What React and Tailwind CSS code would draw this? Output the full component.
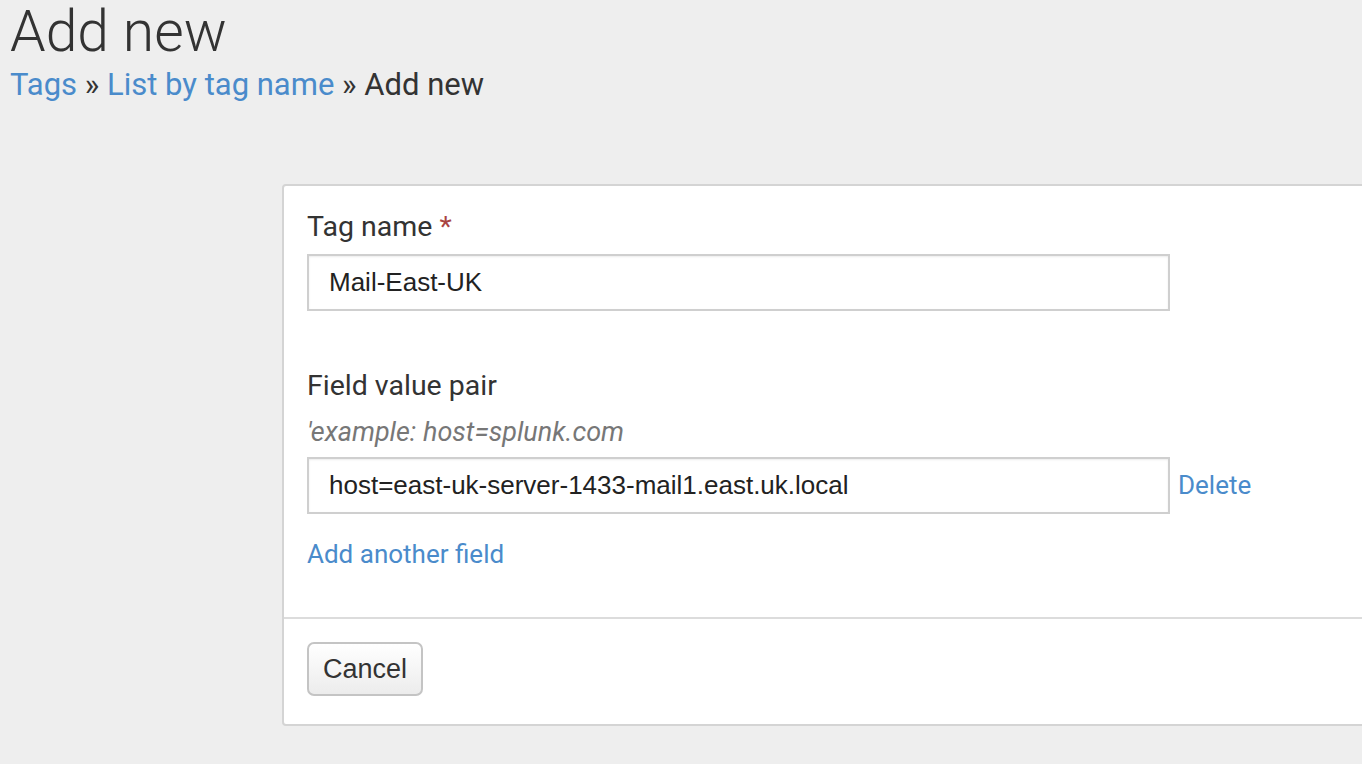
export default function App() {
  return (
    <div className="min-h-screen bg-[#eeeeee] font-['Roboto',sans-serif] text-[#333333] overflow-hidden">
      <div className="pl-[10px] pt-0">
        <h1 className="text-[57px] font-light leading-[64px] text-[#333]">Add new</h1>
        <div className="text-[31px] leading-[42px]">
          <a className="text-[#4a8bcb]">Tags</a>
          <span className="text-[#333]"> » </span>
          <a className="text-[#4a8bcb]">List by tag name</a>
          <span className="text-[#333]"> » Add new</span>
        </div>
      </div>

      <div className="ml-[282px] mt-[78px] w-[1100px] bg-white border-2 border-[#d4d4d4] rounded-[4px]">
        <div className="px-[23px] pt-[24px] pb-[47px]">
          <label className="block text-[28.5px] leading-[34px] text-[#333]">
            Tag name <span className="text-[#a94442]">*</span>
          </label>
          <input
            readOnly
            value="Mail-East-UK"
            className="mt-[10px] block w-[863px] h-[57px] border-2 border-[#cfcfcf] bg-white px-[20px] text-[26px] font-['Liberation_Sans',Arial,sans-serif] text-[#222] shadow-[inset_0_1px_2px_rgba(0,0,0,0.08)] outline-none"
          />

          <label className="block mt-[58px] text-[28.5px] leading-[34px] text-[#333]">Field value pair</label>
          <div className="mt-[14px] text-[27px] leading-[30px] italic text-[#777]">'example: host=splunk.com</div>
          <div className="mt-[10px] flex items-center gap-[8px]">
            <input
              readOnly
              value="host=east-uk-server-1433-mail1.east.uk.local"
              className="block w-[863px] h-[57px] border-2 border-[#cfcfcf] bg-white px-[20px] text-[26px] font-['Liberation_Sans',Arial,sans-serif] text-[#222] shadow-[inset_0_1px_2px_rgba(0,0,0,0.08)] outline-none"
            />
            <a className="text-[26px] text-[#4a8bcb]">Delete</a>
          </div>
          <a className="block mt-[24px] text-[26px] leading-[32px] text-[#4a8bcb]">Add another field</a>
        </div>
        <div className="border-t-2 border-[#dcdcdc] px-[23px] pt-[23px] pb-[28px]">
          <button className="h-[54px] px-[14px] rounded-[7px] border-2 border-[#c4c4c4] bg-gradient-to-b from-white to-[#ececec] text-[27px] font-['Liberation_Sans',Arial,sans-serif] text-[#333]">
            Cancel
          </button>
        </div>
      </div>
    </div>
  )
}
